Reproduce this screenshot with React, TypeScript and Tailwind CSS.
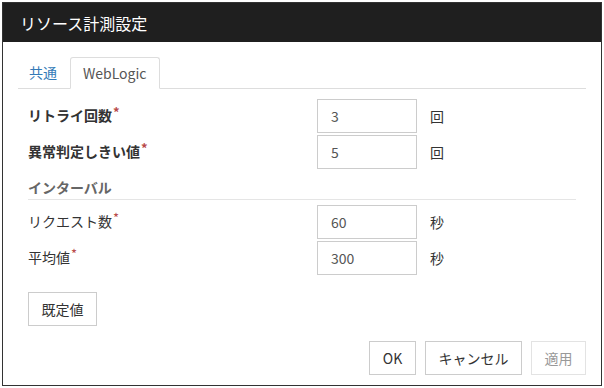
import React from "react";

const font = { fontFamily: '"Noto Sans CJK JP", "Noto Sans", sans-serif' };

function Req() {
  return <span className="relative -top-[4px] ml-[1px] text-[13px] leading-[10px] text-[#b94a48]">*</span>;
}

function Row({ label, value, unit, bold }: { label: string; value: string; unit: string; bold?: boolean }) {
  return (
    <div className="flex items-center h-[34px]">
      <div className={`w-[289px] -mt-[3px] text-[14px] leading-[20px] text-[#333] ${bold ? "font-bold" : ""}`}>
        {label}
        <Req />
      </div>
      <div className="w-[100px] h-[34px] border border-[#ccc] flex items-center pl-[13px] text-[14px] text-[#555]">
        {value}
      </div>
      <div className="ml-[13px] text-[14px] text-[#333]">{unit}</div>
    </div>
  );
}

export default function App() {
  return (
    <div className="w-[604px] h-[388px] bg-white pt-[2px] pl-[2px]" style={font}>
      <div className="w-[600px] h-[384px] border border-[#333] flex flex-col">
        <div className="h-[39px] bg-[#1f1f1f] flex items-center pl-[17px] text-white text-[16px]">
          リソース計測設定
        </div>
        <div className="px-[15px] pt-[16px] flex flex-col">
          <div className="flex items-end h-[31px] border-b border-[#ddd]">
            <div className="h-[31px] px-[11px] flex items-center text-[14px] text-[#337ab7]">共通</div>
            <div className="ml-[2px] h-[32px] -mb-[1px] px-[12px] flex items-center text-[14px] text-[#555] bg-white border border-[#ddd] border-b-white rounded-t-[3px]">
              WebLogic
            </div>
          </div>
          <div className="pl-[10px] pr-[10px] mt-[10px] flex flex-col gap-[2px]">
            <Row label="リトライ回数" value="3" unit="回" bold />
            <Row label="異常判定しきい値" value="5" unit="回" bold />
          </div>
          <div className="mx-[10px] mt-[8px] pb-[2px] border-b border-[#e5e5e5] text-[14px] leading-[20px] font-bold text-[#666]">
            インターバル
          </div>
          <div className="pl-[10px] mt-[5px] flex flex-col gap-[2px]">
            <Row label="リクエスト数" value="60" unit="秒" />
            <Row label="平均値" value="300" unit="秒" />
          </div>
          <div className="pl-[10px] mt-[17px]">
            <button className="w-[69px] h-[34px] border border-[#ccc] bg-white text-[14px] text-[#333]">既定値</button>
          </div>
          <div className="mt-[15px] flex justify-end gap-[9px]">
            <button className="w-[47px] h-[34px] border border-[#ccc] bg-white text-[14px] text-[#333]">OK</button>
            <button className="w-[97px] h-[34px] border border-[#ccc] bg-white text-[14px] text-[#333]">キャンセル</button>
            <button className="w-[55px] h-[34px] border border-[#e3e3e3] bg-white text-[14px] text-[#999]">適用</button>
          </div>
        </div>
      </div>
    </div>
  );
}
